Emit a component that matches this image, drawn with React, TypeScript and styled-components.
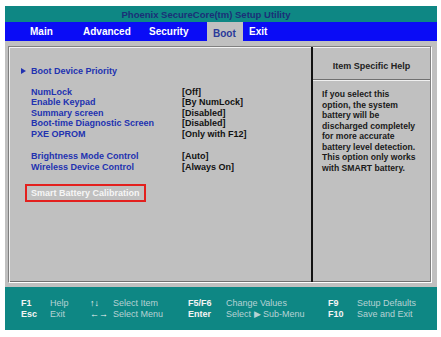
import React from "react";
import styled, { createGlobalStyle } from "styled-components";

const GlobalStyle = createGlobalStyle`
  body {
    margin: 0;
    background: #ffffff;
    font-family: "Liberation Sans", Arial, sans-serif;
  }
`;

const teal = "#0e8784";
const gray = "#c0c0c0";

const Screen = styled.div`
  width: 432px;
  margin: 6px 0 0 5px;
  display: flex;
  flex-direction: column;
  font-weight: bold;
  font-size: 9px;
`;

const TitleBar = styled.div`
  height: 16px;
  background: ${teal};
  color: #1b2f78;
  display: flex;
  align-items: center;
  justify-content: center;
  padding-right: 30px;
  font-size: 9.5px;
`;

const MenuBar = styled.div`
  height: 19px;
  background: #0a0cf6;
  display: flex;
  padding-left: 19px;
`;

const Tab = styled.div<{ $width?: number; $active?: boolean }>`
  width: ${(p) => (p.$width ? `${p.$width}px` : "auto")};
  padding: 0 6px;
  box-sizing: border-box;
  display: flex;
  align-items: center;
  font-size: 10px;
  color: ${(p) => (p.$active ? "#2a3a9a" : "#ffffff")};
  background: ${(p) => (p.$active ? gray : "transparent")};
  padding-top: ${(p) => (p.$active ? "3px" : "0")};
`;

const Body = styled.div`
  height: 246px;
  background: ${gray};
  padding: 5px 5px 4px 3px;
  box-sizing: border-box;
  display: flex;
`;

const Panel = styled.div`
  flex: 1;
  display: grid;
  grid-template-columns: 302px 1fr;
  border-top: 1px solid #808080;
  border-left: 1px solid #808080;
  border-right: 1px solid #ffffff;
  border-bottom: 1px solid #ffffff;
  box-shadow: inset 1px 1px 0 #f4f4f4, inset -1px -1px 0 #707070;
`;

const SettingsColumn = styled.div`
  padding: 19px 0 0 22px;
  display: flex;
  flex-direction: column;
  color: #2232b0;
  line-height: 10.5px;
`;

const Group = styled.div`
  margin-bottom: 12px;
`;

const SubMenu = styled.div`
  position: relative;
  margin-bottom: 10px;
  &::before {
    content: "";
    position: absolute;
    left: -10px;
    top: 2px;
    border-left: 5px solid #2232b0;
    border-top: 3.5px solid transparent;
    border-bottom: 3.5px solid transparent;
  }
`;

const SettingRow = styled.div`
  display: grid;
  grid-template-columns: 151px auto;
`;

const Value = styled.span`
  color: #111111;
`;

const Selected = styled.div`
  align-self: flex-start;
  margin-left: -6px;
  width: 121px;
  height: 18px;
  box-sizing: border-box;
  border: 2px solid #e3201e;
  color: #f6f6f6;
  padding-left: 4px;
  display: flex;
  align-items: center;
`;

const HelpColumn = styled.div`
  border-left: 2px solid #111111;
  border-right: 1px solid #808080;
  display: flex;
  flex-direction: column;
`;

const HelpHeader = styled.div`
  height: 26px;
  display: flex;
  align-items: center;
  justify-content: center;
  color: #222222;
  border-bottom: 1px solid #707070;
  box-shadow: 0 1px 0 #f0f0f0;
  padding-top: 6px;
`;

const HelpText = styled.div`
  padding: 9px 4px 0 9px;
  line-height: 10.5px;
  color: #1a1a1a;
  font-size: 8.6px;
`;

const Footer = styled.div`
  height: 43px;
  background: ${teal};
  display: grid;
  grid-template-columns: 29px 40px 23px 75px 38px 102px 29px auto;
  align-content: center;
  padding-left: 16px;
  line-height: 11px;
`;

const Key = styled.span`
  color: #f4f4f4;
`;

const Desc = styled.span`
  color: #b7d2d4;
  font-weight: normal;
`;

const settings = [
  ["NumLock", "[Off]"],
  ["Enable Keypad", "[By NumLock]"],
  ["Summary screen", "[Disabled]"],
  ["Boot-time Diagnostic Screen", "[Disabled]"],
  ["PXE OPROM", "[Only with F12]"],
];

const controls = [
  ["Brightness Mode Control", "[Auto]"],
  ["Wireless Device Control", "[Always On]"],
];

const keys = [
  ["F1", "Help", "\u2191\u2193", "Select Item", "F5/F6", "Change Values", "F9", "Setup Defaults"],
  ["Esc", "Exit", "\u2190\u2192", "Select Menu", "Enter", "Select \u25B6 Sub-Menu", "F10", "Save and Exit"],
];

export default function App() {
  return (
    <>
      <GlobalStyle />
      <Screen>
        <TitleBar>Phoenix SecureCore(tm) Setup Utility</TitleBar>
        <MenuBar>
          <Tab $width={53}>Main</Tab>
          <Tab $width={66}>Advanced</Tab>
          <Tab $width={64}>Security</Tab>
          <Tab $width={36} $active>
            Boot
          </Tab>
          <Tab>Exit</Tab>
        </MenuBar>
        <Body>
          <Panel>
            <SettingsColumn>
              <SubMenu>Boot Device Priority</SubMenu>
              <Group>
                {settings.map(([label, value]) => (
                  <SettingRow key={label}>
                    <span>{label}</span>
                    <Value>{value}</Value>
                  </SettingRow>
                ))}
              </Group>
              <Group>
                {controls.map(([label, value]) => (
                  <SettingRow key={label}>
                    <span>{label}</span>
                    <Value>{value}</Value>
                  </SettingRow>
                ))}
              </Group>
              <Selected>Smart Battery Calibration</Selected>
            </SettingsColumn>
            <HelpColumn>
              <HelpHeader>Item Specific Help</HelpHeader>
              <HelpText>
                If you select this
                <br />
                option, the system
                <br />
                battery will be
                <br />
                discharged completely
                <br />
                for more accurate
                <br />
                battery level detection.
                <br />
                This option only works
                <br />
                with SMART battery.
              </HelpText>
            </HelpColumn>
          </Panel>
        </Body>
        <Footer>
          {keys.map((row) =>
            row.map((cell, i) =>
              i % 2 === 0 ? <Key key={cell}>{cell}</Key> : <Desc key={cell}>{cell}</Desc>
            )
          )}
        </Footer>
      </Screen>
    </>
  );
}
